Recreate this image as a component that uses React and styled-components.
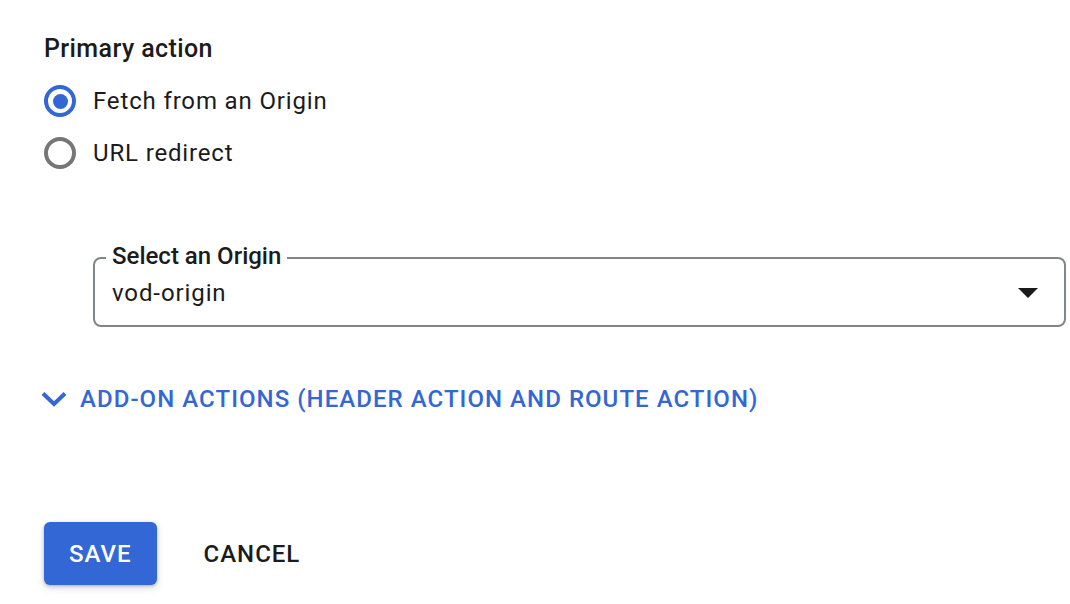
import React, { useState } from "react";
import styled, { createGlobalStyle } from "styled-components";

const GlobalStyle = createGlobalStyle`
  html, body {
    margin: 0;
    padding: 0;
    background: #ffffff;
    font-family: Roboto, "Liberation Sans", Arial, sans-serif;
    color: #1b1b1b;
  }
`;

const BLUE = "#3367d6";
const INK = "#1b1b1b";

const Page = styled.div`
  width: 1070px;
  height: 604px;
  box-sizing: border-box;
  padding: 34px 4px 0 44px;
  display: flex;
  flex-direction: column;
`;

const Title = styled.div`
  font-size: 25px;
  font-weight: 500;
  letter-spacing: 0.4px;
  line-height: 30px;
  color: ${INK};
`;

const RadioGroup = styled.div`
  display: flex;
  flex-direction: column;
  gap: 20px;
  margin-top: 21px;
`;

const RadioRow = styled.label`
  display: flex;
  align-items: center;
  gap: 17px;
  height: 32px;
  cursor: pointer;
`;

const RadioCircle = styled.span`
  width: 32px;
  height: 32px;
  box-sizing: border-box;
  border-radius: 50%;
  border: 4px solid ${p => (p.checked ? BLUE : "#767676")};
  display: flex;
  align-items: center;
  justify-content: center;

  &::after {
    content: "";
    width: 15px;
    height: 15px;
    border-radius: 50%;
    background: ${BLUE};
    display: ${p => (p.checked ? "block" : "none")};
  }
`;

const RadioLabel = styled.span`
  font-size: 24px;
  letter-spacing: 0.85px;
  line-height: 32px;
  color: ${INK};
`;

const SelectField = styled.div`
  position: relative;
  margin: 88px 0 0 49px;
  height: 70px;
  box-sizing: border-box;
  border: 2px solid #80868b;
  border-radius: 8px;
  display: flex;
  align-items: center;
  justify-content: space-between;
  padding: 1px 26px 0 17px;
`;

const FloatLabel = styled.span`
  position: absolute;
  top: -17px;
  left: 11px;
  padding: 0 6px;
  background: #ffffff;
  font-size: 24px;
  font-weight: 500;
  line-height: 28px;
  color: ${INK};
`;

const SelectValue = styled.span`
  font-size: 24px;
  letter-spacing: 0.9px;
  line-height: 32px;
  color: ${INK};
`;

const Expander = styled.button`
  margin: 56px 0 0 -3px;
  display: flex;
  align-items: center;
  gap: 13px;
  padding: 0;
  border: none;
  background: none;
  cursor: pointer;
  font-family: inherit;
  font-size: 24px;
  font-weight: 500;
  letter-spacing: 1.05px;
  line-height: 32px;
  color: ${BLUE};
  text-align: left;
  white-space: nowrap;
`;

const Actions = styled.div`
  margin-top: 107px;
  display: flex;
  align-items: center;
  gap: 23px;
`;

const Button = styled.button`
  font-family: inherit;
  font-size: 24px;
  font-weight: 500;
  letter-spacing: 1px;
  height: 63px;
  padding: 0 ${p => (p.primary ? "25px" : "24px")};
  border-radius: 6px;
  border: none;
  cursor: pointer;
  background: ${p => (p.primary ? BLUE : "transparent")};
  color: ${p => (p.primary ? "#ffffff" : INK)};
  box-shadow: ${p =>
    p.primary
      ? "0 1px 3px rgba(60,64,67,0.3), 0 3px 6px 1px rgba(60,64,67,0.15)"
      : "none"};
`;

const ChevronIcon = () => (
  <svg width="26" height="16" viewBox="0 0 26 16">
    <polyline
      points="2,2.5 13,13 24,2.5"
      fill="none"
      stroke={BLUE}
      strokeWidth="4"
    />
  </svg>
);

const DropArrow = () => (
  <svg width="20" height="10" viewBox="0 0 20 10">
    <polygon points="0,0 20,0 10,10" fill={INK} />
  </svg>
);

const App = () => {
  const [choice, setChoice] = useState("origin");

  return (
    <>
      <GlobalStyle />
      <Page>
        <Title>Primary action</Title>
        <RadioGroup>
          <RadioRow onClick={() => setChoice("origin")}>
            <RadioCircle checked={choice === "origin"} />
            <RadioLabel>Fetch from an Origin</RadioLabel>
          </RadioRow>
          <RadioRow onClick={() => setChoice("redirect")}>
            <RadioCircle checked={choice === "redirect"} />
            <RadioLabel>URL redirect</RadioLabel>
          </RadioRow>
        </RadioGroup>

        <SelectField>
          <FloatLabel>Select an Origin</FloatLabel>
          <SelectValue>vod-origin</SelectValue>
          <DropArrow />
        </SelectField>

        <Expander>
          <ChevronIcon />
          ADD-ON ACTIONS (HEADER ACTION AND ROUTE ACTION)
        </Expander>

        <Actions>
          <Button primary>SAVE</Button>
          <Button>CANCEL</Button>
        </Actions>
      </Page>
    </>
  );
};

export default App;
